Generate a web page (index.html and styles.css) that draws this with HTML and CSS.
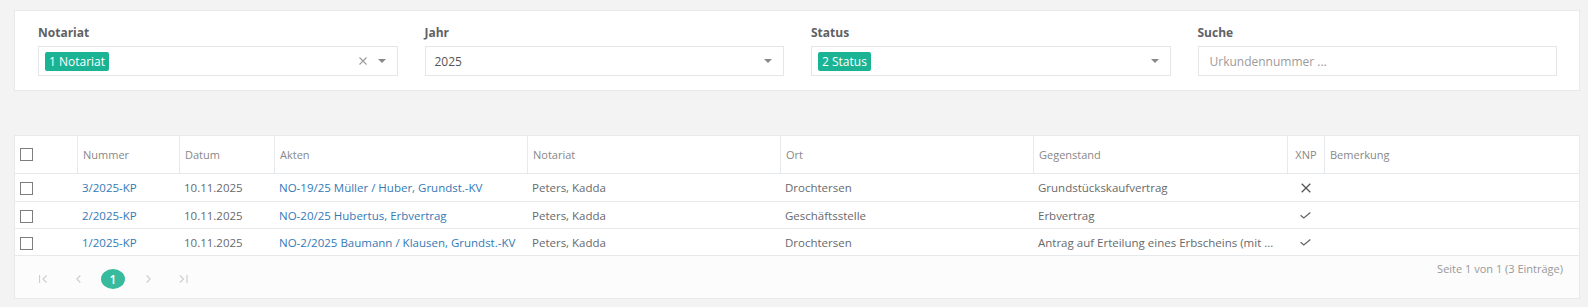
FILE: index.html
```html
<!DOCTYPE html>
<html lang="de">
<head>
    <meta charset="UTF-8">
    <meta name="viewport" content="width=device-width, initial-scale=1.0">
    <title>Urkunden</title>
    <link rel="stylesheet" href="styles.css">
</head>
<body>
    <div class="page">
        <div class="panel filters">
            <div class="field">
                <label class="field-label">Notariat</label>
                <div class="select">
                    <span class="tag">1 Notariat</span>
                    <span class="select-clear">
                        <svg width="8" height="8" viewBox="0 0 8 8"><path d="M0.5 0.5 L7.5 7.5 M7.5 0.5 L0.5 7.5" stroke="#9a9a9a" stroke-width="1.1" fill="none"/></svg>
                    </span>
                    <span class="select-arrow"></span>
                </div>
            </div>
            <div class="field">
                <label class="field-label">Jahr</label>
                <div class="select">
                    <span class="select-value">2025</span>
                    <span class="select-arrow"></span>
                </div>
            </div>
            <div class="field">
                <label class="field-label">Status</label>
                <div class="select">
                    <span class="tag">2 Status</span>
                    <span class="select-arrow"></span>
                </div>
            </div>
            <div class="field">
                <label class="field-label" for="search">Suche</label>
                <input class="search" type="text" id="search" placeholder="Urkundennummer ...">
            </div>
        </div>

        <div class="panel grid">
            <table class="records">
                <thead>
                    <tr>
                        <th class="col-check"><span class="checkbox"></span></th>
                        <th class="col-nummer">Nummer</th>
                        <th class="col-datum">Datum</th>
                        <th class="col-wide">Akten</th>
                        <th class="col-wide">Notariat</th>
                        <th class="col-wide">Ort</th>
                        <th class="col-gegenstand">Gegenstand</th>
                        <th class="col-xnp">XNP</th>
                        <th>Bemerkung</th>
                    </tr>
                </thead>
                <tbody>
                    <tr class="first">
                        <td><span class="checkbox"></span></td>
                        <td><a href="#">3/2025-KP</a></td>
                        <td>10.11.2025</td>
                        <td><a href="#">NO-19/25 Müller / Huber, Grundst.-KV</a></td>
                        <td>Peters, Kadda</td>
                        <td>Drochtersen</td>
                        <td>Grundstückskaufvertrag</td>
                        <td class="xnp">
                            <svg width="10" height="10" viewBox="0 0 10 10"><path d="M0.7 0.7 L9.3 9.3 M9.3 0.7 L0.7 9.3" stroke="#555" stroke-width="1.3" fill="none"/></svg>
                        </td>
                        <td></td>
                    </tr>
                    <tr>
                        <td><span class="checkbox"></span></td>
                        <td><a href="#">2/2025-KP</a></td>
                        <td>10.11.2025</td>
                        <td><a href="#">NO-20/25 Hubertus, Erbvertrag</a></td>
                        <td>Peters, Kadda</td>
                        <td>Geschäftsstelle</td>
                        <td>Erbvertrag</td>
                        <td class="xnp">
                            <svg width="11" height="7" viewBox="0 0 11 7"><path d="M0.6 3.2 L3.8 6 L10.4 0.6" stroke="#666" stroke-width="1.3" fill="none"/></svg>
                        </td>
                        <td></td>
                    </tr>
                    <tr>
                        <td><span class="checkbox"></span></td>
                        <td><a href="#">1/2025-KP</a></td>
                        <td>10.11.2025</td>
                        <td><a href="#">NO-2/2025 Baumann / Klausen, Grundst.-KV</a></td>
                        <td>Peters, Kadda</td>
                        <td>Drochtersen</td>
                        <td>Antrag auf Erteilung eines Erbscheins (mit ...</td>
                        <td class="xnp">
                            <svg width="11" height="7" viewBox="0 0 11 7"><path d="M0.6 3.2 L3.8 6 L10.4 0.6" stroke="#666" stroke-width="1.3" fill="none"/></svg>
                        </td>
                        <td></td>
                    </tr>
                </tbody>
            </table>

            <div class="pager-bar">
                <div class="pager">
                    <span class="pager-item">
                        <svg width="9" height="8" viewBox="0 0 9 8"><path d="M0.5 0 V8 M7.5 0.5 L4 4 L7.5 7.5" stroke="#cfcfcf" stroke-width="1.2" fill="none"/></svg>
                    </span>
                    <span class="pager-item">
                        <svg width="5" height="8" viewBox="0 0 5 8"><path d="M4.3 0.5 L0.8 4 L4.3 7.5" stroke="#cfcfcf" stroke-width="1.2" fill="none"/></svg>
                    </span>
                    <span class="pager-item current">1</span>
                    <span class="pager-item">
                        <svg width="5" height="8" viewBox="0 0 5 8"><path d="M0.7 0.5 L4.2 4 L0.7 7.5" stroke="#cfcfcf" stroke-width="1.2" fill="none"/></svg>
                    </span>
                    <span class="pager-item">
                        <svg width="9" height="8" viewBox="0 0 9 8"><path d="M1 0.5 L4.5 4 L1 7.5 M8 0 V8" stroke="#cfcfcf" stroke-width="1.2" fill="none"/></svg>
                    </span>
                </div>
                <div class="pager-info">Seite 1 von 1 (3 Einträge)</div>
            </div>
        </div>
    </div>
</body>
</html>
```

FILE: styles.css
```css
body {
    margin: 0;
    background: #f3f3f4;
    font-family: "Open Sans", "Liberation Sans", sans-serif;
    font-size: 12px;
    color: #676a6c;
}
.page {
    padding: 10px 8px 8px 14px;
}
.panel {
    background: #fff;
    border: 1px solid #e7eaec;
}

/* filter bar */
.filters {
    display: grid;
    grid-template-columns: repeat(4, 1fr);
    column-gap: 27px;
    padding: 14px 22px 14px 23px;
    margin-bottom: 44px;
}
.field-label {
    display: block;
    font-weight: bold;
    line-height: 16px;
    margin-bottom: 5px;
    color: #5f6163;
}
.select {
    display: flex;
    align-items: center;
    height: 30px;
    box-sizing: border-box;
    border: 1px solid #e5e6e7;
    padding: 0 11px 0 6px;
}
.select-value {
    flex: 1;
    padding-left: 3px;
    color: #555;
}
.tag {
    background: #1ab394;
    color: #fff;
    line-height: 19px;
    padding: 0 4px;
    border-radius: 2px;
}
.select-clear {
    margin-left: auto;
    margin-right: 11px;
    display: flex;
}
.select-arrow {
    margin-left: auto;
    width: 0;
    height: 0;
    border-left: 4px solid transparent;
    border-right: 4px solid transparent;
    border-top: 4px solid #888;
}
.select-clear + .select-arrow {
    margin-left: 0;
}
.search {
    display: block;
    width: 100%;
    height: 30px;
    box-sizing: border-box;
    border: 1px solid #e5e6e7;
    padding: 0 11px;
    font-family: inherit;
    font-size: 12px;
    color: #555;
    outline: none;
}
.search::placeholder {
    color: #9b9b9b;
}

/* table */
.records {
    width: 100%;
    table-layout: fixed;
    border-collapse: separate;
    border-spacing: 0;
}
.records th,
.records td {
    box-sizing: border-box;
    padding: 0 5px;
    text-align: left;
    white-space: nowrap;
    overflow: hidden;
    text-overflow: ellipsis;
    border-bottom: 1px solid #e7eaec;
}
.records th {
    height: 38px;
    font-size: 11px;
    font-weight: normal;
    color: #888;
    border-left: 1px solid #e7eaec;
}
.records th:first-child {
    border-left: none;
}
.records td {
    height: 27px;
    font-size: 11.5px;
}
.records tr.first td {
    height: 28px;
}
.records a {
    color: #337ab7;
    text-decoration: none;
}
.col-check { width: 62px; }
.col-nummer { width: 102px; }
.col-datum { width: 95px; }
.col-wide { width: 253px; }
.col-gegenstand { width: 254px; }
.col-xnp { width: 37px; }
.records th.col-xnp,
.records td.xnp {
    text-align: center;
    padding: 0;
}
.xnp svg {
    display: block;
    margin: 0 auto;
}
.checkbox {
    display: block;
    width: 13px;
    height: 13px;
    box-sizing: border-box;
    border: 1px solid #7d7d7d;
    background: #fff;
}
.records td .checkbox {
    margin-top: 2px;
}

/* pager */
.pager-bar {
    display: flex;
    justify-content: space-between;
    align-items: flex-start;
    height: 42px;
    background: #fcfcfc;
}
.pager {
    display: flex;
    gap: 11px;
    padding: 13px 0 0 16px;
}
.pager-item {
    display: flex;
    align-items: center;
    justify-content: center;
    width: 24px;
    height: 20px;
}
.pager-item.current {
    background: #37bb9c;
    color: #fff;
    border-radius: 50%;
    font-weight: 600;
}
.pager-info {
    padding: 5px 16px 0 0;
    font-size: 11px;
    line-height: 16px;
    color: #999;
}
```
